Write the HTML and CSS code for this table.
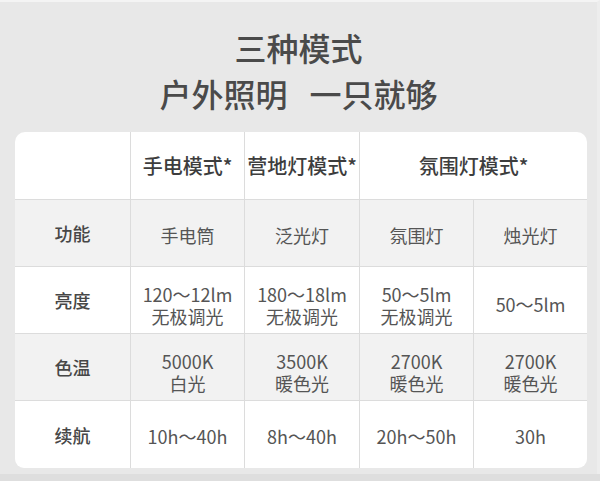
FILE: index.html
```html
<!DOCTYPE html>
<html lang="zh">
<head>
<meta charset="utf-8">
<link rel="stylesheet" href="styles.css">
</head>
<body>
<div class="page">
  <div class="title">
    <div class="line">三种模式</div>
    <div class="line">户外照明<span class="gap"></span>一只就够</div>
  </div>
  <div class="card">
    <div class="cell head first"></div>
    <div class="cell head">手电模式*</div>
    <div class="cell head">营地灯模式*</div>
    <div class="cell head span2">氛围灯模式*</div>

    <div class="cell gray label">功能</div>
    <div class="cell gray data">手电筒</div>
    <div class="cell gray data">泛光灯</div>
    <div class="cell gray data">氛围灯</div>
    <div class="cell gray data">烛光灯</div>

    <div class="cell label">亮度</div>
    <div class="cell data two">120～12lm<br>无极调光</div>
    <div class="cell data two">180～18lm<br>无极调光</div>
    <div class="cell data two">50～5lm<br>无极调光</div>
    <div class="cell data lone">50～5lm</div>

    <div class="cell gray label">色温</div>
    <div class="cell gray data two">5000K<br>白光</div>
    <div class="cell gray data two">3500K<br>暖色光</div>
    <div class="cell gray data two">2700K<br>暖色光</div>
    <div class="cell gray data two">2700K<br>暖色光</div>

    <div class="cell label">续航</div>
    <div class="cell data">10h～40h</div>
    <div class="cell data">8h～40h</div>
    <div class="cell data">20h～50h</div>
    <div class="cell data">30h</div>
  </div>
</div>
</body>
</html>
```
FILE: styles.css
```css
* { box-sizing: border-box; }
html, body { margin: 0; padding: 0; }
body {
  width: 600px;
  height: 481px;
  overflow: hidden;
  background: #dedede;
  font-family: "Noto Sans CJK SC", "Noto Sans", sans-serif;
}
.page {
  width: 600px;
  height: 474px;
  background: #e8e8e8;
  border-top: 2px solid #f4f4f4;
  border-right: 3px solid #ededed;
  padding: 0 0 0 15px;
}
.title {
  padding-top: 22px;
  height: 130px;
  text-align: center;
  color: #4a4a4a;
  font-size: 32px;
  font-weight: 500;
  line-height: 46px;
  margin-left: -15px;
}
.title .gap {
  display: inline-block;
  width: 22px;
}
.card {
  width: 572px;
  height: 336px;
  background: #fff;
  border-radius: 10px 10px 9px 9px;
  overflow: hidden;
  display: grid;
  grid-template-columns: 115px 114px 115px 114px 114px;
  grid-template-rows: 67px 67px 67px 67px 68px;
}
.cell {
  display: flex;
  align-items: center;
  justify-content: center;
  text-align: center;
  border-left: 1px solid #dcdcdc;
  border-top: 1px solid #dcdcdc;
  font-size: 18px;
  line-height: 22px;
  color: #555;
}
.cell.head {
  border-top: none;
  font-size: 20px;
  font-weight: 500;
  color: #3d3d3d;
}
.cell.first, .cell.label { border-left: none; }
.cell.span2 { grid-column: span 2; }
.cell.gray { background: #f2f2f2; }
.cell.label { color: #474747; font-weight: 500; }
.cell.data { padding-top: 3px; }
.cell.data.two { padding-top: 9px; }
.cell.data.lone { padding-top: 8px; }
```
